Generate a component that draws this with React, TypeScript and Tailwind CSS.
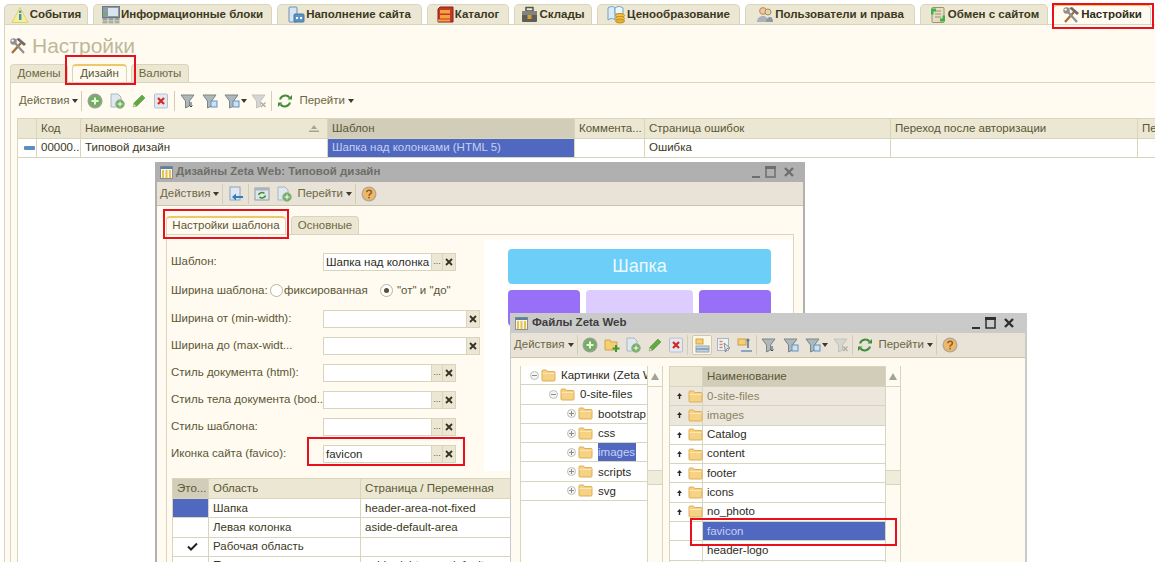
import type { ReactNode } from "react";

const LINE = "border-[#d9d5bd]";

/* ---------- icons ---------- */

function Svg({ w = 16, h = 16, children, className = "" }: { w?: number; h?: number; children: ReactNode; className?: string }) {
  return (
    <svg width={w} height={h} viewBox={`0 0 ${w} ${h}`} className={`shrink-0 ${className}`}>
      {children}
    </svg>
  );
}

function InfoIcon() {
  return (
    <Svg w={18} h={18}>
      <path d="M9 1.5 17 16.5H1Z" fill="#f6ef8e" stroke="#d9d27a" strokeLinejoin="round" />
      <rect x="8" y="8" width="2.4" height="6" fill="#3b8fd6" />
      <circle cx="9.2" cy="5.8" r="1.3" fill="#3b8fd6" />
    </Svg>
  );
}

function BlocksIcon() {
  return (
    <Svg w={18} h={18}>
      <rect x="0.5" y="0.5" width="17" height="11" fill="#8b9aa8" stroke="#6c7985" />
      <rect x="6" y="2" width="10" height="8" fill="#d9e4ee" />
      <rect x="1.5" y="7" width="3.5" height="2" fill="#67b25c" />
      <rect x="0.5" y="12" width="5" height="2.5" fill="#99a193" />
      <rect x="6.5" y="12" width="5" height="2.5" fill="#99a193" />
      <rect x="12.5" y="12" width="5" height="2.5" fill="#99a193" />
      <rect x="0.5" y="15" width="5" height="2.5" fill="#aab0a4" />
      <rect x="6.5" y="15" width="5" height="2.5" fill="#aab0a4" />
      <rect x="12.5" y="15" width="5" height="2.5" fill="#aab0a4" />
    </Svg>
  );
}

function ContentIcon() {
  return (
    <Svg w={17} h={18}>
      <rect x="1" y="1" width="8" height="15" rx="1" fill="#d7e4f1" stroke="#6f8fb3" />
      <rect x="6" y="8" width="10" height="8" rx="1" fill="#5b93c9" stroke="#46769f" />
      <rect x="8" y="11" width="2" height="2" fill="#fff" />
      <rect x="12" y="11" width="2" height="2" fill="#fff" />
    </Svg>
  );
}

function CatalogIcon() {
  return (
    <Svg w={17} h={18}>
      <path d="M3 1h13v15H1V3Z" fill="#c8352a" stroke="#7d2620" />
      <rect x="3" y="4" width="10" height="3.5" fill="#f3a33c" />
      <rect x="3" y="9" width="10" height="3.5" fill="#f3a33c" />
      <rect x="1" y="13.5" width="12" height="2" fill="#f3a33c" />
    </Svg>
  );
}

function CaseIcon() {
  return (
    <Svg w={17} h={17}>
      <rect x="5" y="1.5" width="7" height="3.5" fill="none" stroke="#55554f" strokeWidth="1.5" />
      <rect x="1" y="5" width="15" height="11" rx="1" fill="#5e5e58" />
      <rect x="1" y="5" width="15" height="4" fill="#83837c" />
      <rect x="6.5" y="9" width="4" height="4" fill="#d99a2f" />
    </Svg>
  );
}

function PriceIcon() {
  return (
    <Svg w={19} h={19}>
      <path d="M1 3c3-2 5-2 7 0v12c-2-2-4-2-7 0Z" fill="#dcebf6" stroke="#6fa1cb" />
      <path d="M8 3c3-2 5-2 8 0v6H8Z" fill="#eef5fb" stroke="#6fa1cb" />
      <ellipse cx="13" cy="10.5" rx="4.5" ry="2" fill="#f2c240" stroke="#c4921e" />
      <ellipse cx="13" cy="13.5" rx="4.5" ry="2" fill="#f2c240" stroke="#c4921e" />
      <ellipse cx="13" cy="16" rx="4.5" ry="2" fill="#e7b02c" stroke="#c4921e" />
    </Svg>
  );
}

function UsersIcon() {
  return (
    <Svg w={18} h={17}>
      <circle cx="7" cy="5" r="3.4" fill="#f0c79c" stroke="#b68a5f" />
      <circle cx="12" cy="6" r="3" fill="#e9d3a8" stroke="#a68c60" />
      <path d="M1 16c0-4 3-6 6-6s5 2 5 6Z" fill="#a9b2bd" />
      <path d="M10 16c0-3 2-5 4-5s3 2 3 5Z" fill="#8e99a5" />
    </Svg>
  );
}

function ExchangeIcon() {
  return (
    <Svg w={18} h={18}>
      <rect x="3" y="1.5" width="12" height="15" rx="1" fill="#e5dcc2" stroke="#9c9272" />
      <path d="M6 5h6M6 8h6M6 11h6" stroke="#9c9272" />
      <path d="M2 2.5h5v3H4.5v3H2Z" fill="#3fb24a" />
      <path d="M16 15.5h-5v-3h2.5v-3H16Z" fill="#3fb24a" />
    </Svg>
  );
}

function ToolsIcon({ s = 18 }: { s?: number }) {
  return (
    <svg width={s} height={s} viewBox="0 0 18 18" className="shrink-0">
      <path d="M3 16 12 6" stroke="#a5703e" strokeWidth="2.4" />
      <path d="M7 2 15 9l2-2-7-6Z" fill="#6c6c6c" />
      <path d="M15 16 6 6" stroke="#8f8f8f" strokeWidth="2.2" />
      <circle cx="4.5" cy="4.5" r="3.2" fill="#8f8f8f" />
      <circle cx="3.6" cy="3.6" r="1.2" fill="#fffbf0" />
    </svg>
  );
}

function GreenPlus() {
  return (
    <Svg>
      <circle cx="8" cy="8" r="7.5" fill="#9d9f97" />
      <circle cx="8" cy="8" r="6" fill="#6fb05e" />
      <path d="M8 4.5v7M4.5 8h7" stroke="#eaf5e4" strokeWidth="2" />
    </Svg>
  );
}

function DocPlus() {
  return (
    <Svg>
      <path d="M2 1h7l3 3v10H2Z" fill="#dfe7ef" stroke="#a9b6c2" />
      <circle cx="11" cy="11" r="4.3" fill="#6fb05e" stroke="#9bb592" />
      <path d="M11 8.5v5M8.5 11h5" stroke="#fff" />
    </Svg>
  );
}

function FolderPlus() {
  return (
    <Svg>
      <path d="M1 3h5l1 2h6v8H1Z" fill="#f4cf73" stroke="#d0a548" />
      <path d="M12 8v7M8.5 11.5h7" stroke="#3e9b33" strokeWidth="2" />
    </Svg>
  );
}

function Pencil() {
  return (
    <Svg>
      <path d="M2 14 3 10 11 2l3 3-8 8Z" fill="#62a944" stroke="#4c8a35" strokeWidth="0.5" />
      <path d="M2 14 3 11l2 2Z" fill="#e7dcb5" />
    </Svg>
  );
}

function RedX() {
  return (
    <Svg>
      <rect x="1.5" y="1" width="13" height="14" rx="1" fill="#e4e9f1" stroke="#b6c0cd" />
      <path d="M5 5l6 6M11 5l-6 6" stroke="#d5281f" strokeWidth="2.2" />
    </Svg>
  );
}

function Funnel({ grey, kind }: { grey?: boolean; kind: "a" | "b" | "c" }) {
  const fill = grey ? "#d5d5d2" : "#aeb8bb";
  return (
    <Svg>
      <path d="M1 2h13L9.5 8v5l-4 2V8Z" fill={fill} stroke={grey ? "#c2c2be" : "#7b8689"} />
      {kind === "a" && <path d="M11 9v5M9.5 12.5 11 14l1.5-1.5" stroke="#3b4d57" fill="none" />}
      {kind === "b" && <rect x="9" y="8" width="6" height="6" fill="#cfe0ef" stroke="#5f93c0" />}
      {kind === "c" && <path d="M10 9.5l4.5 4.5M14.5 9.5 10 14" stroke="#b7a9a0" strokeWidth="1.4" />}
    </Svg>
  );
}

function Refresh() {
  return (
    <Svg>
      <path d="M3 6.5A5.5 5.5 0 0 1 12.5 4.5" fill="none" stroke="#3f8f3a" strokeWidth="2" />
      <path d="M10.5 6.5h4.5V2Z" fill="#3f8f3a" />
      <path d="M13 9.5A5.5 5.5 0 0 1 3.5 11.5" fill="none" stroke="#3f8f3a" strokeWidth="2" />
      <path d="M5.5 9.5H1V14Z" fill="#3f8f3a" />
    </Svg>
  );
}

function Help() {
  return (
    <Svg>
      <circle cx="8" cy="8" r="7.5" fill="#a9a9a2" />
      <circle cx="8" cy="8" r="6.2" fill="#f0b765" />
      <path d="M5.8 6.2C6 3.6 10.4 3.6 10.4 6.2 10.4 8 8 7.8 8 9.8" fill="none" stroke="#8f5f2d" strokeWidth="1.6" />
      <rect x="7.2" y="10.8" width="1.6" height="1.6" fill="#8f5f2d" />
    </Svg>
  );
}

function BackDoc() {
  return (
    <Svg>
      <rect x="2" y="1" width="10" height="13" fill="#dfe8f2" stroke="#8fa3ba" />
      <path d="M15 11H6" stroke="#2f7cc2" strokeWidth="2" />
      <path d="M8 7.5 4 11l4 3.5Z" fill="#2f7cc2" />
    </Svg>
  );
}

function RefreshBox() {
  return (
    <Svg>
      <rect x="1" y="2" width="14" height="12" fill="#dfe6ea" stroke="#8f9ba3" />
      <rect x="1" y="2" width="14" height="2.5" fill="#a9b6bf" />
      <path d="M4.5 9a3.5 3 0 0 1 6-1.5M11.5 9.5a3.5 3 0 0 1-6 1.5" fill="none" stroke="#3f8f3a" strokeWidth="1.5" />
    </Svg>
  );
}

function ViewTree({ kind }: { kind: "a" | "b" | "c" }) {
  if (kind === "a") {
    return (
      <Svg>
        <rect x="2" y="2" width="7" height="5" fill="#f4cf73" stroke="#d0a548" />
        <rect x="2" y="9" width="13" height="2.5" fill="#c5d4e2" stroke="#8ea6bb" />
        <rect x="2" y="12.5" width="13" height="2.5" fill="#c5d4e2" stroke="#8ea6bb" />
      </Svg>
    );
  }
  if (kind === "b") {
    return (
      <Svg>
        <rect x="1.5" y="1.5" width="11" height="12" fill="#eef2f6" stroke="#a9b6c2" />
        <path d="M3.5 4.5h3M3.5 7.5h3M3.5 10.5h3" stroke="#d08a6a" strokeWidth="1.4" />
        <path d="M8 6l6 5-3 .5L9.5 15Z" fill="#e6e8ea" stroke="#6d7780" strokeWidth="0.8" />
      </Svg>
    );
  }
  return (
    <Svg>
      <rect x="1" y="2" width="8" height="6" fill="#f4cf73" stroke="#c9a14a" />
      <path d="M11 2v9" stroke="#5e7890" strokeWidth="1.6" />
      <path d="M4 13h11v2H4Z" fill="#8ea6bb" />
      <circle cx="11" cy="3" r="1.6" fill="#5e7890" />
    </Svg>
  );
}

function Folder() {
  return (
    <svg width="15" height="13" viewBox="0 0 15 13" className="shrink-0">
      <path d="M1 3V2a1 1 0 0 1 1-1h3.5l1 1.5H13a1 1 0 0 1 1 1v7.500a1 1 0 0 1-1 1H2a1 1 0 0 1-1-1Z" fill="#f6d284" stroke="#dfae55" />
      <path d="M1.500 4.500h12" stroke="#fbe7b4" />
    </svg>
  );
}

function WindowGlyph() {
  return (
    <svg width="13" height="13" viewBox="0 0 13 13" className="shrink-0">
      <rect x="0.500" y="0.500" width="12" height="12" fill="#f7f7ef" stroke="#8f8f8f" />
      <rect x="0.500" y="0.500" width="12" height="2.500" fill="#5d7ea0" />
      <rect x="2" y="4" width="2" height="8" fill="#e6c34a" />
      <rect x="5.500" y="4" width="2" height="8" fill="#e6c34a" />
      <rect x="9" y="4" width="2" height="8" fill="#e6c34a" />
    </svg>
  );
}

function WindowControls({ color }: { color: string }) {
  return (
    <svg width="46" height="14" viewBox="0 0 46 14" className="shrink-0">
      <rect x="0" y="11" width="8" height="2" fill={color} />
      <rect x="14" y="2" width="9" height="10" fill="none" stroke={color} strokeWidth="1.500" />
      <rect x="13" y="1" width="11" height="3" fill={color} />
      <path d="M33 3l8 8M41 3l-8 8" stroke={color} strokeWidth="2.400" />
    </svg>
  );
}

function Caret({ className = "" }: { className?: string }) {
  return <span className={`shrink-0 border-x-[3px] border-t-[4px] border-x-transparent border-t-[#3d3a28] ${className}`} />;
}

function Sep({ className = "" }: { className?: string }) {
  return <span className={`h-[20px] w-px shrink-0 bg-[#d2cdb5] ${className}`} />;
}

/* ---------- chrome ---------- */

const topTabs = [
  { label: "События", icon: <InfoIcon />, width: "w-[84px]" },
  { label: "Информационные блоки", icon: <BlocksIcon />, width: "w-[179px]" },
  { label: "Наполнение сайта", icon: <ContentIcon />, width: "w-[145px]" },
  { label: "Каталог", icon: <CatalogIcon />, width: "w-[82px]" },
  { label: "Склады", icon: <CaseIcon />, width: "w-[78px]" },
  { label: "Ценообразование", icon: <PriceIcon />, width: "w-[143px]" },
  { label: "Пользователи и права", icon: <UsersIcon />, width: "w-[170px]" },
  { label: "Обмен с сайтом", icon: <ExchangeIcon />, width: "w-[128px]" },
  { label: "Настройки", icon: <ToolsIcon />, width: "w-[98px]", active: true },
];

function TopTabs() {
  return (
    <div className="flex h-[24px] shrink-0 items-end gap-[5px] pl-[4px] pt-[4px]">
      {topTabs.map((t) => (
        <div
          key={t.label}
          className={`flex h-[20px] items-center justify-center gap-[1px] rounded-t-[5px] border border-b-0 text-[11.5px] font-bold ${t.width} ${
            t.active
              ? "border-[#d9d5bd] border-t-2 border-t-[#eec76a] bg-[#fffbf0] text-[#2f2d1c]"
              : "border-[#d9d5bd] bg-[#ece7d2] text-[#3b3822]"
          }`}
        >
          {t.icon}
          <span className="whitespace-nowrap">{t.label}</span>
        </div>
      ))}
    </div>
  );
}

function SubTab({ label, active, className }: { label: string; active?: boolean; className: string }) {
  return (
    <div
      className={`flex h-[18px] items-center justify-center rounded-t-[4px] border border-b-0 border-[#d9d5bd] text-[11.5px] ${className} ${
        active ? "border-t-2 border-t-[#eec76a] bg-[#fffbf0] text-[#5c5838]" : "bg-[#ece7d2] text-[#6b6744]"
      }`}
    >
      {label}
    </div>
  );
}

function ToolText({ children, className = "" }: { children: ReactNode; className?: string }) {
  return <span className={`whitespace-nowrap text-[11.5px] text-[#6b6744] ${className}`}>{children}</span>;
}

function HeadCell({ children, className = "" }: { children?: ReactNode; className?: string }) {
  return (
    <div className={`flex shrink-0 items-center overflow-hidden whitespace-nowrap border-r ${LINE} pl-[4px] text-[11.5px] text-[#5a5636] ${className}`}>
      {children}
    </div>
  );
}

function BodyCell({ children, className = "" }: { children?: ReactNode; className?: string }) {
  return (
    <div className={`flex shrink-0 items-center overflow-hidden whitespace-nowrap border-r ${LINE} pl-[4px] text-[11.5px] text-[#3b3822] ${className}`}>
      {children}
    </div>
  );
}

function DocDash() {
  return <span className="h-[4px] w-[11px] shrink-0 rounded-[1px] bg-[#5f8dbd]" />;
}

function MainList() {
  return (
    <div className={`flex min-h-0 flex-1 flex-col border-l ${LINE} bg-white`}>
      <div className={`flex h-[21px] shrink-0 border-y ${LINE} bg-[#ece7d2]`}>
        <HeadCell className="w-[19px]" />
        <HeadCell className="w-[44px]">Код</HeadCell>
        <HeadCell className="relative w-[247px]">
          Наименование
          <svg width="10" height="8" viewBox="0 0 10 8" className="ml-auto mr-[8px]">
            <path d="M5 0 8 4H2Z" fill="#a8a48a" />
            <rect x="0" y="5.500" width="10" height="1.500" fill="#a8a48a" />
          </svg>
        </HeadCell>
        <HeadCell className="w-[247px] bg-[#d1cdb9]">Шаблон</HeadCell>
        <HeadCell className="w-[70px]">Коммента...</HeadCell>
        <HeadCell className="w-[246px]">Страница ошибок</HeadCell>
        <HeadCell className="w-[247px]">Переход после авторизации</HeadCell>
        <HeadCell className="flex-1 border-r-0">Пе</HeadCell>
      </div>
      <div className={`flex h-[19px] shrink-0 border-b ${LINE}`}>
        <BodyCell className="w-[19px] justify-center pl-0">
          <DocDash />
        </BodyCell>
        <BodyCell className="w-[44px]">00000...</BodyCell>
        <BodyCell className="w-[247px]">Типовой дизайн</BodyCell>
        <BodyCell className="w-[247px] bg-[#5068c0] !text-[#c6d0f2]">Шапка над колонками (HTML 5)</BodyCell>
        <BodyCell className="w-[70px]" />
        <BodyCell className="w-[246px]">Ошибка</BodyCell>
        <BodyCell className="w-[247px]" />
      </div>
    </div>
  );
}

/* ---------- "Дизайны" window ---------- */

function FieldButtons({ dots = true }: { dots?: boolean }) {
  return (
    <>
      {dots && (
        <span className="flex w-[11px] shrink-0 items-end justify-center border-l border-[#d9d5bd] bg-[#ece7d2] pb-[4px] text-[9px] leading-none text-[#55513a]">
          ...
        </span>
      )}
      <span className="flex w-[13px] shrink-0 items-center justify-center border-l border-[#d9d5bd] bg-[#ece7d2]">
        <svg width="8" height="8" viewBox="0 0 8 8">
          <path d="M1 1l6 6M7 1 1 7" stroke="#33322a" strokeWidth="1.800" />
        </svg>
      </span>
    </>
  );
}

function Field({ label, value, wide }: { label: string; value?: string; wide?: boolean }) {
  return (
    <div className="flex h-[18px] shrink-0 items-center">
      <span className="w-[152px] shrink-0 overflow-hidden whitespace-nowrap text-[11.5px] text-[#5a5636]">{label}</span>
      <div className={`flex h-full border ${LINE} bg-white ${wide ? "w-[157px]" : "w-[133px]"}`}>
        <span className="min-w-0 flex-1 overflow-hidden whitespace-nowrap pl-[2px] text-[11.5px] leading-[16px] text-[#2c2b22]">{value}</span>
        <FieldButtons dots={!wide} />
      </div>
    </div>
  );
}

function Radio({ checked }: { checked?: boolean }) {
  return (
    <span className="flex h-[13px] w-[13px] shrink-0 items-center justify-center rounded-full border border-[#b9b59c] bg-white">
      {checked && <span className="h-[5px] w-[5px] rounded-full bg-[#55513a]" />}
    </span>
  );
}

function Swatch({ className }: { className: string }) {
  return <div className={`h-[36px] rounded-[4px] ${className}`} />;
}

function DesignWindow() {
  return (
    <div className="absolute left-[155px] top-[162px] flex h-[400px] w-[650px] flex-col bg-[#b0b0b0] px-[2px]">
      <div className="flex h-[20px] shrink-0 items-center pl-[3px] pr-[5px]">
        <WindowGlyph />
        <span className="ml-[3px] text-[11.5px] font-bold text-[#6e6e68]">Дизайны Zeta Web: Типовой дизайн</span>
        <span className="ml-auto">
          <WindowControls color="#6e6e6e" />
        </span>
      </div>
      <div className="flex h-[24px] shrink-0 items-center border-b border-[#c9c4a7] bg-[#e9e3d7] pl-[3px]">
        <ToolText>Действия</ToolText>
        <Caret className="ml-[3px]" />
        <Sep className="ml-[3px]" />
        <span className="ml-[5px]"><BackDoc /></span>
        <Sep className="ml-[4px]" />
        <span className="ml-[5px]"><RefreshBox /></span>
        <span className="ml-[6px]"><DocPlus /></span>
        <ToolText className="ml-[5px]">Перейти</ToolText>
        <Caret className="ml-[3px]" />
        <Sep className="ml-[3px]" />
        <span className="ml-[5px]"><Help /></span>
      </div>
      <div className="flex min-h-0 flex-1 flex-col bg-[#fffbf0] pl-[9px] pr-[9px] pt-[10px]">
        <div className="flex shrink-0 gap-[5px]">
          <SubTab label="Настройки шаблона" active className="w-[120px]" />
          <SubTab label="Основные" className="w-[68px]" />
        </div>
        <div className="flex min-h-0 flex-1 flex-col border-x border-t border-[#d9d5bd]">
          <div className="flex h-[236px] shrink-0">
            <div className="flex w-[317px] shrink-0 flex-col gap-[9px] pl-[4px] pt-[18px]">
              <Field label="Шаблон:" value="Шапка над колонка" />
              <div className="flex h-[21px] shrink-0 items-center text-[11.5px] text-[#5a5636]">
                <span className="w-[99px] shrink-0 whitespace-nowrap">Ширина шаблона:</span>
                <Radio />
                <span className="ml-[1px] w-[96px] shrink-0">фиксированная</span>
                <Radio checked />
                <span className="ml-[4px] whitespace-nowrap">"от" и "до"</span>
              </div>
              <Field label="Ширина от (min-width):" wide />
              <Field label="Ширина до (max-widt..." wide />
              <Field label="Стиль документа (html):" />
              <Field label="Стиль тела документа (bod..." />
              <Field label="Стиль шаблона:" />
              <Field label="Иконка сайта (favico):" value="favicon" />
            </div>
            <div className="mt-[5px] flex flex-1 flex-col gap-[6px] bg-white pl-[24px] pr-[22px] pt-[9px]">
              <div className="flex h-[35px] shrink-0 items-center justify-center rounded-[4px] bg-[#6dcff8] text-[18px] text-[#eafaff]">Шапка</div>
              <div className="flex gap-[6px]">
                <div className="w-[72px]"><Swatch className="bg-[#9870f8]" /></div>
                <div className="flex-1"><Swatch className="bg-[#dcccff]" /></div>
                <div className="w-[72px]"><Swatch className="bg-[#9870f8]" /></div>
              </div>
            </div>
          </div>
          <div className={`ml-[5px] mt-[7px] flex min-h-0 flex-1 flex-col border-l ${LINE} bg-white`}>
            <div className={`flex h-[21px] shrink-0 border-y ${LINE} bg-[#ece7d2]`}>
              <HeadCell className="w-[36px] bg-[#d1cdb9]">Это...</HeadCell>
              <HeadCell className="w-[152px]">Область</HeadCell>
              <HeadCell className="flex-1">Страница / Переменная</HeadCell>
            </div>
            {[
              ["Шапка", "header-area-not-fixed", "blue"],
              ["Левая колонка", "aside-default-area", ""],
              ["Рабочая область", "", "check"],
              ["Правая колонка", "aside-right-area-default", ""],
            ].map(([area, page, mark]) => (
              <div key={area} className={`flex h-[19.3px] shrink-0 border-b ${LINE}`}>
                <BodyCell className={`w-[36px] justify-center pl-0 ${mark === "blue" ? "bg-[#5068c0]" : ""}`}>
                  {mark === "check" && (
                    <svg width="11" height="9" viewBox="0 0 11 9">
                      <path d="M1 4.500 4 7.500 10 1.500" fill="none" stroke="#23221a" strokeWidth="2" />
                    </svg>
                  )}
                </BodyCell>
                <BodyCell className="w-[152px]">{area}</BodyCell>
                <BodyCell className="flex-1">{page}</BodyCell>
              </div>
            ))}
          </div>
        </div>
      </div>
    </div>
  );
}

/* ---------- "Файлы" window ---------- */

function ScrollCol({ thumbGap }: { thumbGap: string }) {
  return (
    <div className={`flex w-[16px] shrink-0 flex-col border-x ${LINE} bg-[#fdfbf2]`}>
      <div className={`flex h-[21px] shrink-0 items-center justify-center border-b ${LINE}`}>
        <span className="border-x-[4px] border-b-[7px] border-x-transparent border-b-[#a4a296]" />
      </div>
      <div className={`h-[15px] shrink-0 border-y ${LINE} bg-[#f0ecdb] ${thumbGap}`} />
    </div>
  );
}

const treeRows = [
  { label: "Картинки (Zeta Web)", level: "pl-[9px]", minus: true },
  { label: "0-site-files", level: "pl-[28px]", minus: true },
  { label: "bootstrap", level: "pl-[46px]" },
  { label: "css", level: "pl-[46px]" },
  { label: "images", level: "pl-[46px]", selected: true },
  { label: "scripts", level: "pl-[46px]" },
  { label: "svg", level: "pl-[46px]" },
];

const fileRows = [
  { label: "0-site-files", folder: true, muted: true },
  { label: "images", folder: true, muted: true },
  { label: "Catalog", folder: true },
  { label: "content", folder: true },
  { label: "footer", folder: true },
  { label: "icons", folder: true },
  { label: "no_photo", folder: true },
  { label: "favicon", selected: true },
  { label: "header-logo" },
  { label: "logo" },
];

function Expander({ minus }: { minus?: boolean }) {
  return (
    <span className="flex h-[9px] w-[9px] shrink-0 items-center justify-center rounded-full border border-[#bdbdb8] bg-[#f5f5f2]">
      <svg width="5" height="5" viewBox="0 0 5 5">
        <path d={minus ? "M0 2.500h5" : "M0 2.500h5M2.500 0v5"} stroke="#8c8c86" />
      </svg>
    </span>
  );
}

function FilesWindow() {
  return (
    <div className="absolute left-[510px] top-[313px] flex h-[249px] w-[517px] flex-col bg-[#cacaca] pl-[1px] pr-[2px]">
      <div className="flex h-[20px] shrink-0 items-center pl-[4px] pr-[7px]">
        <WindowGlyph />
        <span className="ml-[4px] text-[11.5px] font-bold text-[#3e3e3a]">Файлы Zeta Web</span>
        <span className="ml-auto">
          <WindowControls color="#2f2f2f" />
        </span>
      </div>
      <div className="flex h-[25px] shrink-0 items-center border-b border-[#c9c4a7] bg-[#e9e3d7] pl-[3px]">
        <ToolText>Действия</ToolText>
        <Caret className="ml-[4px]" />
        <Sep className="ml-[3px]" />
        <span className="ml-[4px]"><GreenPlus /></span>
        <span className="ml-[6px]"><FolderPlus /></span>
        <span className="ml-[5px]"><DocPlus /></span>
        <span className="ml-[6px]"><Pencil /></span>
        <span className="ml-[5px]"><RedX /></span>
        <Sep className="ml-[3px]" />
        <span className="ml-[4px] rounded-[2px] border border-[#cfc9ae] bg-[#fbf7e6] px-[1px] py-[1px]"><ViewTree kind="a" /></span>
        <span className="ml-[4px]"><ViewTree kind="b" /></span>
        <span className="ml-[5px]"><ViewTree kind="c" /></span>
        <Sep className="ml-[3px]" />
        <span className="ml-[4px]"><Funnel kind="a" /></span>
        <span className="ml-[6px]"><Funnel kind="b" /></span>
        <span className="ml-[6px]"><Funnel kind="b" /></span>
        <Caret className="ml-[1px]" />
        <span className="ml-[5px]"><Funnel grey kind="c" /></span>
        <Sep className="ml-[3px]" />
        <span className="ml-[4px]"><Refresh /></span>
        <ToolText className="ml-[5px]">Перейти</ToolText>
        <Caret className="ml-[3px]" />
        <Sep className="ml-[3px]" />
        <span className="ml-[5px]"><Help /></span>
      </div>
      <div className="flex min-h-0 flex-1 bg-[#fffbf0] pl-[9px] pt-[8px]">
        <div className={`flex w-[143px] shrink-0 border-l ${LINE}`}>
          <div className="min-w-0 flex-1 bg-white">
            {treeRows.map((r) => (
              <div key={r.label} className={`flex h-[19.3px] items-center overflow-hidden border-b ${LINE} ${r.level}`}>
                <Expander minus={r.minus} />
                <span className="ml-[2px] mr-[5px]"><Folder /></span>
                <span
                  className={`whitespace-nowrap text-[11.5px] leading-[18px] ${
                    r.selected ? "bg-[#5068c0] pr-[1px] text-[#c6d0f2]" : "text-[#2c2b22]"
                  }`}
                >
                  {r.label}
                </span>
              </div>
            ))}
          </div>
          <ScrollCol thumbGap="mt-[83px]" />
        </div>
        <div className={`ml-[6px] flex w-[232px] shrink-0 border-l ${LINE}`}>
          <div className="min-w-0 flex-1 bg-white">
            <div className={`flex h-[21px] border-y ${LINE}`}>
              <div className={`w-[33px] shrink-0 border-r ${LINE} bg-[#ece7d2]`} />
              <div className="flex flex-1 items-center bg-[#d1cdb9] pl-[4px] text-[11.5px] text-[#5a5636]">Наименование</div>
            </div>
            {fileRows.map((r) => (
              <div key={r.label} className={`flex h-[19.3px] border-b ${LINE} ${r.muted ? "bg-[#ece7dc]" : ""}`}>
                <div className={`flex w-[33px] shrink-0 items-center border-r ${LINE} pl-[7px]`}>
                  {r.folder ? (
                    <>
                      <svg width="5" height="6" viewBox="0 0 5 6" className="mr-[6px] shrink-0">
                        <path d="M2.500 0 5 3H3.200V6H1.800V3H0Z" fill="#2c2b22" />
                      </svg>
                      <Folder />
                    </>
                  ) : (
                    <span className="ml-[13px]"><DocDash /></span>
                  )}
                </div>
                <div
                  className={`flex flex-1 items-center pl-[4px] text-[11.5px] ${
                    r.selected ? "bg-[#5068c0] text-[#c6d0f2]" : r.muted ? "text-[#8a8462]" : "text-[#2c2b22]"
                  }`}
                >
                  {r.label}
                </div>
              </div>
            ))}
          </div>
          <ScrollCol thumbGap="mt-[83px]" />
        </div>
      </div>
    </div>
  );
}

export default function App() {
  return (
    <div className="relative flex h-[562px] w-[1155px] flex-col overflow-hidden bg-white font-['Liberation_Sans',Arial,sans-serif]">
      <TopTabs />
      <div className={`ml-[4px] flex min-h-0 flex-1 flex-col border-l border-t ${LINE} bg-[#fffbf0]`}>
        <div className="flex h-[39px] shrink-0 items-center gap-[5px] pl-[4px] pt-[2px]">
          <ToolsIcon />
          <span className="text-[21px] leading-none text-[#bdb89c]">Настройки</span>
        </div>
        <div className="flex shrink-0 gap-[4px] pl-[5px]">
          <SubTab label="Домены" className="w-[58px]" />
          <SubTab label="Дизайн" active className="w-[55px]" />
          <SubTab label="Валюты" className="w-[58px]" />
        </div>
        <div className={`ml-[5px] flex min-h-0 flex-1 flex-col border-l border-t ${LINE}`}>
          <div className="flex h-[35px] shrink-0 items-center pl-[8px]">
            <ToolText>Действия</ToolText>
            <Caret className="ml-[3px]" />
            <Sep className="ml-[3px]" />
            <span className="ml-[5px]"><GreenPlus /></span>
            <span className="ml-[6px]"><DocPlus /></span>
            <span className="ml-[6px]"><Pencil /></span>
            <span className="ml-[6px]"><RedX /></span>
            <Sep className="ml-[5px]" />
            <span className="ml-[5px]"><Funnel kind="a" /></span>
            <span className="ml-[6px]"><Funnel kind="b" /></span>
            <span className="ml-[6px]"><Funnel kind="b" /></span>
            <Caret className="ml-[1px]" />
            <span className="ml-[4px]"><Funnel grey kind="c" /></span>
            <Sep className="ml-[4px]" />
            <span className="ml-[5px]"><Refresh /></span>
            <ToolText className="ml-[6px]">Перейти</ToolText>
            <Caret className="ml-[3px]" />
          </div>
          <div className="flex min-h-0 flex-1 flex-col pl-[6px]">
            <MainList />
          </div>
        </div>
      </div>

      <DesignWindow />
      <FilesWindow />

      {/* red call-out frames from the original annotated screenshot */}
      <div className="absolute left-[1052px] top-[3px] h-[26px] w-[102px] border-2 border-[#e8101c]" />
      <div className="absolute left-[65px] top-[55px] h-[30px] w-[71px] border-2 border-[#e8101c]" />
      <div className="absolute left-[163px] top-[209px] h-[30px] w-[126px] border-2 border-[#e8101c]" />
      <div className="absolute left-[307px] top-[437px] h-[29px] w-[158px] border-2 border-[#e8101c]" />
      <div className="absolute left-[690px] top-[518px] h-[28px] w-[207px] border-2 border-[#e8101c]" />
    </div>
  );
}
